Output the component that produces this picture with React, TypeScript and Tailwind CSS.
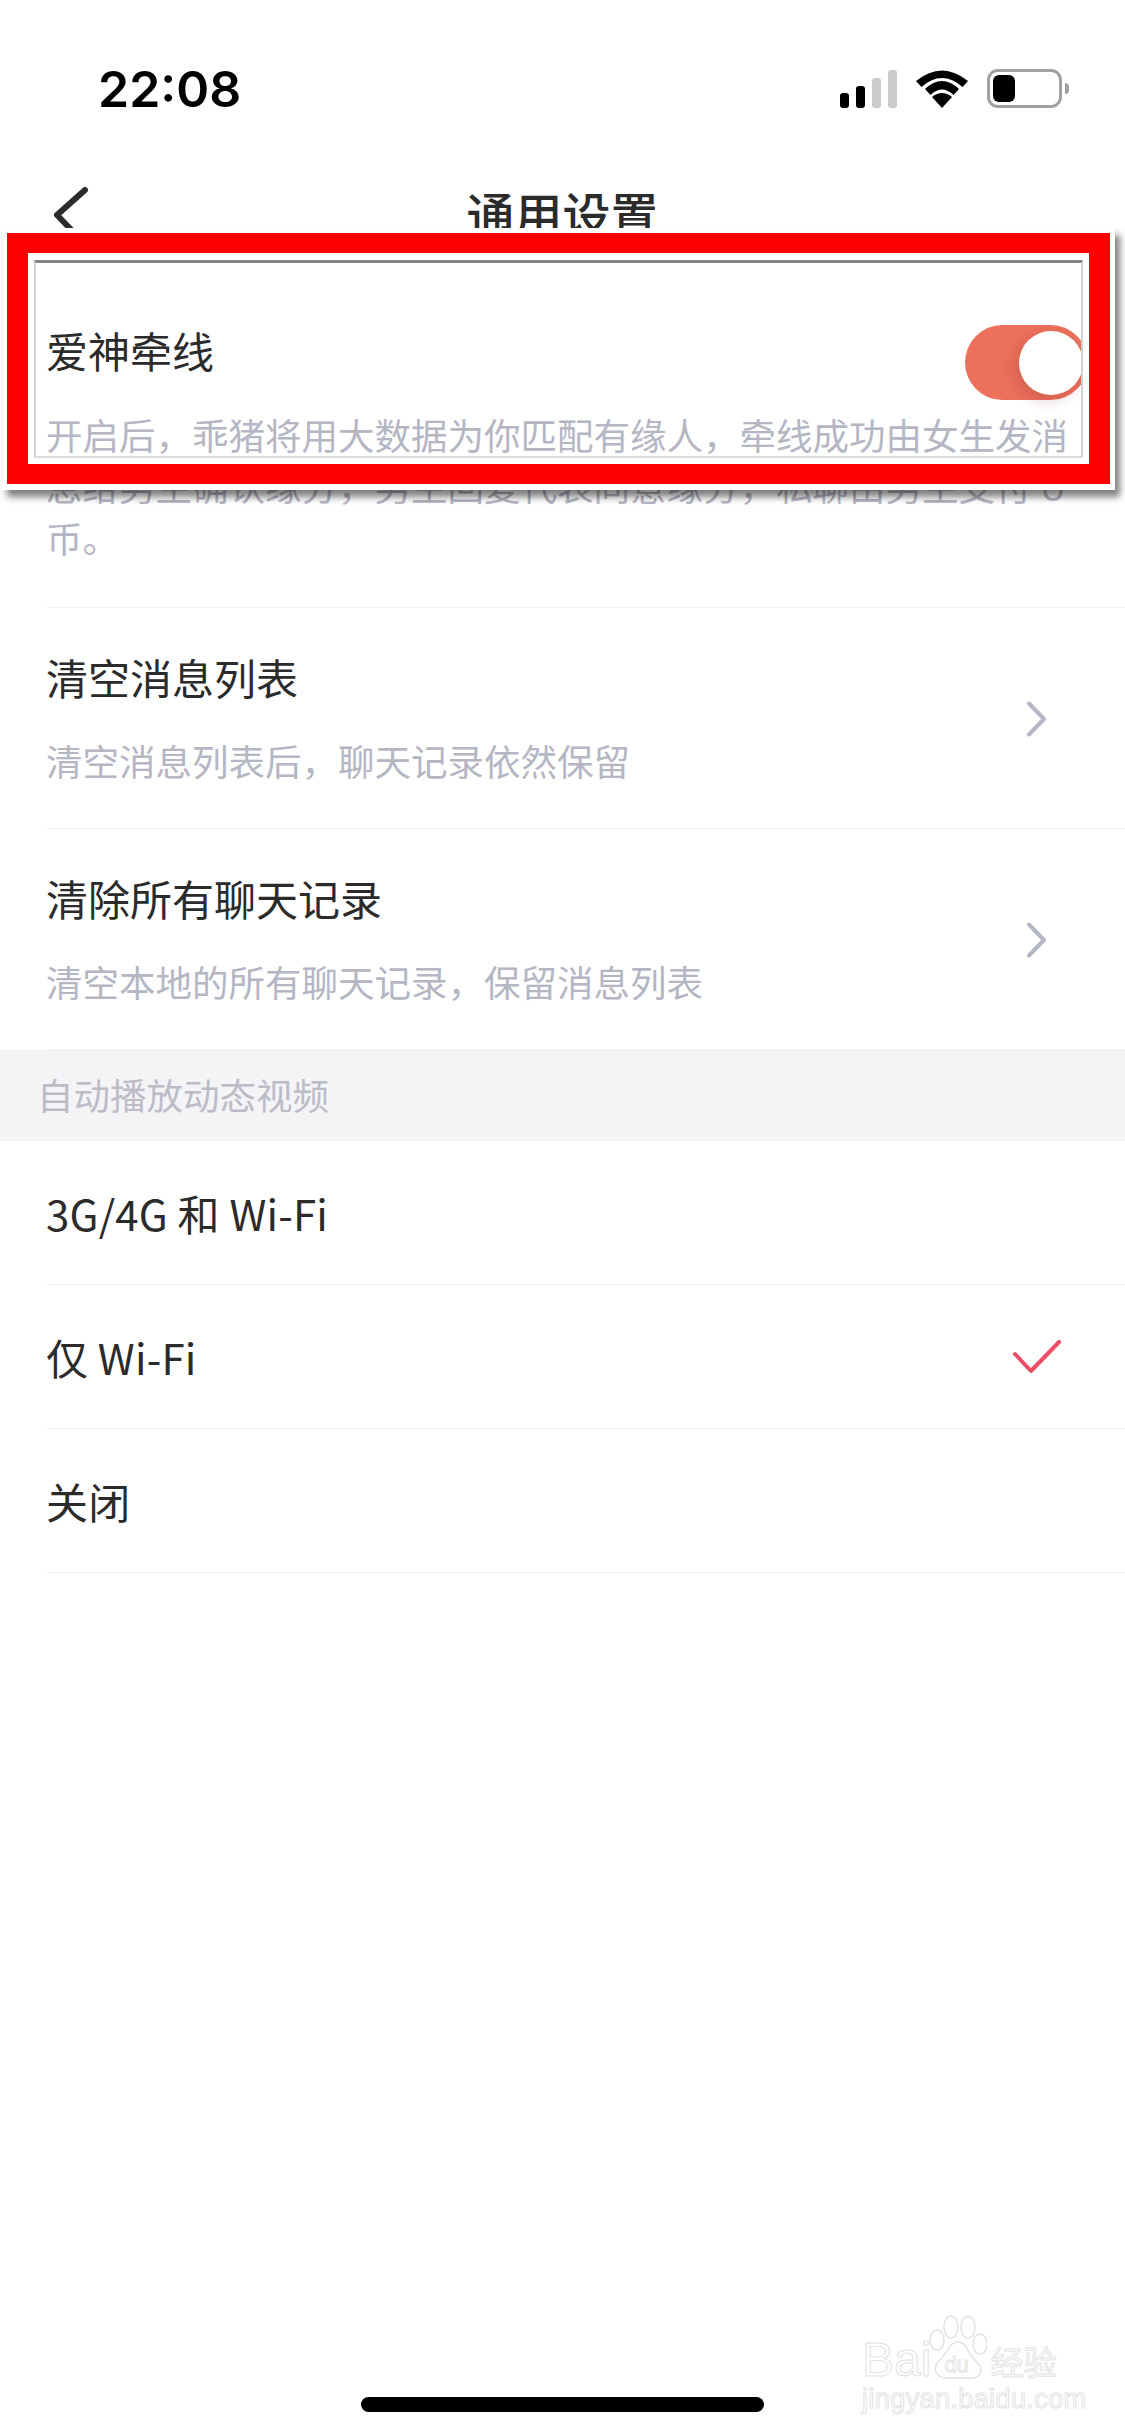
const cjk = "font-['Noto_Sans_CJK_SC','Noto_Sans',sans-serif]";

function Chevron() {
  return (
    <svg width="20" height="36" viewBox="0 0 20 36" className="mt-[2px] shrink-0" fill="none">
      <polyline points="3,2.5 18,18 3,33.5" stroke="#b5b6c6" strokeWidth="4" strokeLinecap="round" strokeLinejoin="round" />
    </svg>
  );
}

function Toggle() {
  return (
    <div className="mt-[62px] -mr-[7px] flex h-[75px] w-[123px] shrink-0 items-center justify-end rounded-full bg-[#ec705c] pr-[5px]">
      <div className="h-[64px] w-[64px] rounded-full bg-white shadow-[-4px_5px_14px_rgba(120,40,30,0.22)]" />
    </div>
  );
}

function ActionRow({ title, sub }: { title: string; sub: string }) {
  return (
    <div className="ml-[46px] flex h-[221px] items-center justify-between border-b border-[#f2f2f5] pr-[79px] last:h-[222px] last:border-b-0">
      <div className="mt-[2px]">
        <div className="text-[42px] leading-[50px] text-[#2b2b2b]">{title}</div>
        <div className="mt-[33px] text-[36.5px] leading-[52px] text-[#b5b6c4]">{sub}</div>
      </div>
      <Chevron />
    </div>
  );
}

function OptionRow({ label, checked }: { label: string; checked?: boolean }) {
  return (
    <div className="ml-[46px] flex h-[144px] items-center justify-between border-b border-[#f2f2f5] pr-[64px] text-[42px] text-[#2b2b2b]">
      <span className="tracking-[0.2px]">{label}</span>
      {checked && (
        <svg width="48" height="34" viewBox="0 0 48 34" fill="none">
          <polyline points="2,14 18,31 46,2" stroke="#ee4d66" strokeWidth="4" strokeLinecap="round" strokeLinejoin="round" />
        </svg>
      )}
    </div>
  );
}

function Signal() {
  return (
    <div className="flex h-[38px] items-end gap-[7px]">
      <div className="h-[15px] w-[9px] rounded-[3px] bg-black" />
      <div className="h-[22px] w-[9px] rounded-[3px] bg-black" />
      <div className="h-[30px] w-[9px] rounded-[3px] bg-[#cccccc]" />
      <div className="h-[38px] w-[9px] rounded-[3px] bg-[#cccccc]" />
    </div>
  );
}

function Wifi() {
  return (
    <svg width="52" height="38" viewBox="0 0 52 38">
      <path d="M26 38 L16 27 Q26 19 36 27 Z" fill="#000" />
      <path d="M9 19 Q26 3 43 19 L37.5 25 Q26 14 14.5 25 Z" fill="#000" />
      <path d="M0 11 Q26 -10 52 11 L46.5 17 Q26 -1 5.5 17 Z" fill="#000" />
    </svg>
  );
}

function Battery() {
  return (
    <div className="flex items-center gap-[3px]">
      <div className="flex h-[39px] w-[75px] items-center rounded-[11px] border-[3px] border-[#a0a0a0] pl-[3px]">
        <div className="h-[27px] w-[22px] rounded-[6px] bg-black" />
      </div>
      <div className="h-[11px] w-[4px] rounded-r-full bg-[#a0a0a0]" />
    </div>
  );
}

function Watermark() {
  const stroke = "text-transparent [-webkit-text-stroke:1px_#e2e2e2]";
  return (
    <div className="absolute left-[862px] top-[2315px] w-[205px] font-['Liberation_Sans',sans-serif]">
      <div className="flex h-[66px] items-end">
        <span className={`text-[48px] leading-[42px] ${stroke}`}>Bai</span>
        <div className="relative -ml-[2px] h-[66px] w-[58px] shrink-0">
          <svg width="58" height="66" viewBox="0 0 58 66" fill="none" stroke="#e2e2e2" strokeWidth="1.5">
            <ellipse cx="8" cy="25" rx="7" ry="10" />
            <ellipse cx="22" cy="12" rx="7" ry="11" />
            <ellipse cx="39" cy="12" rx="7" ry="11" />
            <ellipse cx="51" cy="29" rx="7" ry="10" />
            <path d="M29 27 C20 27 20 37 10 46 C2 54 8 64 20 63 L40 63 C52 64 56 54 47 46 C38 38 38 27 29 27 Z" />
          </svg>
          <span className={`absolute bottom-[5px] left-[15px] text-[22px] leading-[22px] ${stroke}`}>du</span>
        </div>
        <span className={`ml-[3px] text-[33px] leading-[40px] ${stroke} ${cjk}`}>经验</span>
      </div>
      <div className={`mt-[4px] text-[27px] leading-[28px] tracking-[0.4px] ${stroke}`}>jingyan.baidu.com</div>
    </div>
  );
}

export default function App() {
  return (
    <div className={`relative h-[2436px] w-[1125px] overflow-hidden bg-white ${cjk}`}>
      <div className="flex h-[150px] items-end justify-between pl-[98px] pr-[56px] pb-[42px]">
        <span className="font-['Inter',sans-serif] text-[50px] font-semibold leading-[38px] text-black">22:08</span>
        <div className="flex items-center gap-[19px]">
          <Signal />
          <Wifi />
          <Battery />
        </div>
      </div>

      <div className="relative flex h-[130px] items-start justify-center pt-[32px]">
        <svg width="40" height="60" viewBox="0 0 40 60" fill="none" className="absolute left-[50px] top-[37px]">
          <polyline points="35,3 7,28 33,55" stroke="#2b2b2b" strokeWidth="6" strokeLinecap="round" strokeLinejoin="round" />
        </svg>
        <span className="text-[48px] font-medium leading-[60px] text-[#2b2b2b]">通用设置</span>
      </div>

      <div className="ml-[46px] h-[328px] border-b border-[#f2f2f5] pt-[47px]">
        <div className="text-[42px] leading-[50px] text-[#2b2b2b]">爱神牵线</div>
        <div className="mt-[31px] text-[36.5px] leading-[52px] text-[#b5b6c4]">
          <div className="whitespace-nowrap">开启后，乖猪将用大数据为你匹配有缘人，牵线成功由女生发消</div>
          <div className="whitespace-nowrap">息给男生确认缘分，男生回复代表同意缘分，私聊由男生支付 U</div>
          <div>币。</div>
        </div>
      </div>

      <ActionRow title="清空消息列表" sub="清空消息列表后，聊天记录依然保留" />
      <ActionRow title="清除所有聊天记录" sub="清空本地的所有聊天记录，保留消息列表" />

      <div className="flex h-[91px] items-center bg-[#f4f4f6] pl-[37px] text-[36.5px] text-[#bcbcc9]">自动播放动态视频</div>

      <OptionRow label="3G/4G 和 Wi-Fi" />
      <OptionRow label="仅 Wi-Fi" checked />
      <OptionRow label="关闭" />

      {/* pasted highlight frame lying over the page */}
      <div className="absolute left-[2px] top-[228px] h-[262px] w-[1113px] bg-white p-[5px_5px_6px_5px] shadow-[5px_7px_7px_rgba(0,0,0,0.5)]">
        <div className="h-full bg-[#ff0000] p-[20px_21px]">
          <div className="h-full bg-white p-[7px_6px_6px_6px]">
            <div className="h-full overflow-hidden border-x-2 border-b-2 border-t-[3px] border-x-[#d0d0d0] border-b-[#dddddd] border-t-[#858585] pl-[10px]">
              <div className="flex justify-between">
                <div className="mt-[62px] text-[42px] leading-[50px] text-[#2b2b2b]">爱神牵线</div>
                <Toggle />
              </div>
              <div className="mt-[9px] whitespace-nowrap text-[36.5px] leading-[52px] text-[#b5b6c4]">开启后，乖猪将用大数据为你匹配有缘人，牵线成功由女生发消</div>
            </div>
          </div>
        </div>
      </div>

      <div className="absolute bottom-[24px] left-[361px] h-[15px] w-[403px] rounded-full bg-black" />
      <Watermark />
    </div>
  );
}
